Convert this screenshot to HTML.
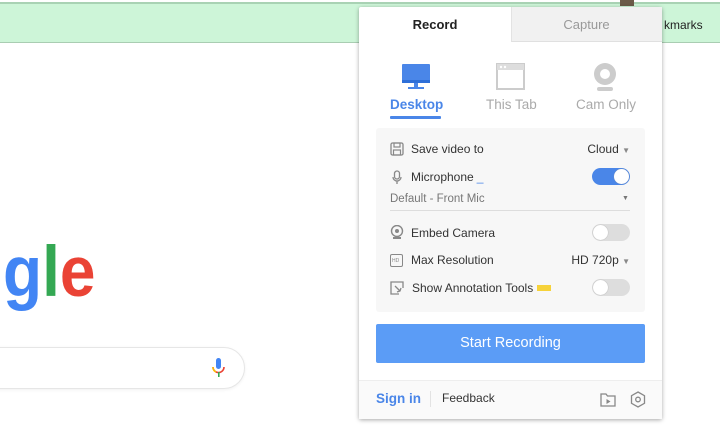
<!DOCTYPE html>
<html><head><style>
*{margin:0;padding:0;box-sizing:border-box}
body{width:720px;height:432px;overflow:hidden;background:#fff;font-family:"Liberation Sans",sans-serif;position:relative}
.abs{position:absolute}
.row{position:absolute;left:390px;font-size:12px;color:#333;display:flex;align-items:center}
.tog{position:absolute;width:38px;height:17px;border-radius:9px;background:#ddd}
.tog::after{content:"";position:absolute;top:1px;left:1px;width:15px;height:15px;border-radius:50%;background:#fff;box-shadow:0 0 1px #999}
.tog.on{background:#4a86e8}.tog.on::after{left:22px}
.ic{position:absolute;left:390px;width:13px;height:13px;border:1.5px solid #888;border-radius:2px}
.rt{position:absolute;right:90px;font-size:12px;color:#333}
</style></head><body>
<div class="abs" style="left:0;top:2px;width:720px;height:41px;background:#cdf5d8;border-top:2px solid #a9d2b4;border-bottom:1.5px solid #a9cdb2"></div>
<div class="abs" style="left:664px;top:18px;font-size:12px;color:#222">kmarks</div>
<div class="abs" style="left:620px;top:0;width:14px;height:6px;background:#6b5a48"></div>
<div class="abs" style="left:3px;top:243px;font-size:64px;font-weight:bold;line-height:1;transform:scaleY(1.12);transform-origin:0 100%"><span style="color:#4285f4">g</span><span style="color:#34a853">l</span><span style="color:#ea4335">e</span></div>
<div class="abs" style="left:-30px;top:347px;width:275px;height:42px;border:1px solid #e6e6e6;border-radius:21px;box-shadow:0 1px 3px rgba(0,0,0,.06)"></div>
<svg class="abs" style="left:211px;top:358px" width="16" height="22"><rect x="5" y="0" width="5" height="11" rx="2.5" fill="#4285f4"/><path d="M2 9a5.5 5.5 0 0 0 11 0" stroke="#ea4335" stroke-width="1.6" fill="none"/><path d="M2 9a5.5 5.5 0 0 0 3 5" stroke="#fbbc05" stroke-width="1.6" fill="none"/><rect x="7" y="14" width="1.6" height="5" fill="#34a853"/></svg>

<div class="abs" style="left:359px;top:7px;width:303px;height:412px;background:#fff;box-shadow:0 1px 4px rgba(0,0,0,.35);border-radius:2px"></div>
<div class="abs" style="left:511px;top:7px;width:151px;height:35px;background:#f1f1f1;border-bottom:1px solid #e0e0e0;border-left:1px solid #e3e3e3"></div>
<div class="abs" style="left:359px;top:17px;width:152px;text-align:center;font-size:13px;font-weight:bold;color:#222">Record</div>
<div class="abs" style="left:511px;top:17px;width:151px;text-align:center;font-size:13px;color:#999">Capture</div>

<svg class="abs" style="left:401px;top:63px" width="30" height="28"><rect x="1" y="1" width="28" height="19" rx="1" fill="#4a86e8"/><rect x="1" y="17" width="28" height="3" fill="#2e6fd8"/><rect x="13" y="20" width="4" height="4" fill="#4a86e8"/><rect x="7" y="24" width="16" height="2" fill="#4a86e8"/></svg>
<svg class="abs" style="left:496px;top:63px" width="29" height="27"><rect x="1" y="1" width="27" height="25" fill="#fff" stroke="#ccc" stroke-width="2"/><rect x="1" y="1" width="27" height="6" fill="#ddd"/><circle cx="5" cy="4" r="1.2" fill="#fff"/><circle cx="9" cy="4" r="1.2" fill="#fff"/></svg>
<svg class="abs" style="left:592px;top:62px" width="26" height="30"><circle cx="13" cy="12" r="11" fill="#ccc"/><circle cx="13" cy="12" r="5" fill="#fff"/><rect x="5" y="25" width="16" height="4" rx="2" fill="#ccc"/></svg>
<div class="abs" style="left:390px;top:97px;font-size:13.5px;font-weight:bold;color:#4a86e8">Desktop</div>
<div class="abs" style="left:390px;top:116px;width:51px;height:3px;background:#4a86e8;border-radius:1px"></div>
<div class="abs" style="left:486px;top:97px;font-size:13.5px;color:#aaa">This Tab</div>
<div class="abs" style="left:576px;top:97px;font-size:13.5px;color:#aaa">Cam Only</div>

<div class="abs" style="left:376px;top:128px;width:269px;height:184px;background:#f7f7f7;border-radius:3px"></div>
<svg class="abs" style="left:390px;top:142px" width="14" height="14"><rect x="1" y="1" width="12" height="12" rx="1.5" fill="none" stroke="#888" stroke-width="1.3"/><rect x="4" y="1" width="6" height="4" fill="none" stroke="#888" stroke-width="1.2"/><rect x="3.5" y="8" width="7" height="5" fill="none" stroke="#888" stroke-width="1.2"/></svg>
<div class="row" style="left:411px;top:142px">Save video to</div><div class="rt" style="top:142px">Cloud <span style="font-size:8px;color:#888">▼</span></div>
<svg class="abs" style="left:392px;top:170px" width="10" height="15"><rect x="2.5" y="1" width="5" height="8" rx="2.5" fill="none" stroke="#888" stroke-width="1.3"/><path d="M1 7a4 4 0 0 0 8 0M5 11v3" stroke="#888" stroke-width="1.3" fill="none"/></svg>
<div class="row" style="left:411px;top:170px">Microphone <span style="color:#4a86e8;margin-left:3px">_</span></div>
<div class="tog on" style="left:592px;top:168px"></div>
<div class="row" style="top:193px;color:#777;font-size:11.5px">Default - Front Mic</div><div class="abs" style="left:622px;top:195px;font-size:7px;color:#777">▼</div>
<div class="abs" style="left:390px;top:210px;width:240px;height:1px;background:#ddd"></div>
<svg class="abs" style="left:390px;top:225px" width="14" height="15"><circle cx="7" cy="6" r="5.5" fill="none" stroke="#888" stroke-width="1.4"/><circle cx="7" cy="6" r="2" fill="#888"/><rect x="3" y="12" width="8" height="2" fill="#888"/></svg>
<div class="row" style="left:411px;top:226px">Embed Camera</div><div class="tog" style="left:592px;top:224px"></div>
<div class="ic" style="top:254px"></div><div class="abs" style="left:392px;top:258px;font-size:5px;color:#888">HD</div>
<div class="row" style="left:411px;top:253px">Max Resolution</div><div class="rt" style="top:253px">HD 720p <span style="font-size:8px;color:#888">▼</span></div>
<svg class="abs" style="left:390px;top:281px" width="15" height="15"><path d="M9 13H1V1h12v6" fill="none" stroke="#888" stroke-width="1.3"/><path d="M5 5l5 5M7 11l3-1 1-3" stroke="#888" stroke-width="1.3" fill="none"/></svg>
<div class="row" style="left:412px;top:281px">Show Annotation Tools <span style="display:inline-block;width:14px;height:6px;background:#f6d23a;margin-left:4px"></span></div>
<div class="tog" style="left:592px;top:279px"></div>

<div class="abs" style="left:376px;top:324px;width:269px;height:39px;background:#5b9cf6;border-radius:2px;color:#fff;font-size:14.5px;text-align:center;line-height:39px">Start Recording</div>
<div class="abs" style="left:359px;top:380px;width:303px;height:39px;background:#fafafa;border-top:1px solid #eee"></div>
<div class="abs" style="left:376px;top:391px;font-size:13.5px;font-weight:bold;color:#4a86e8">Sign in</div>
<div class="abs" style="left:430px;top:391px;width:1px;height:16px;background:#e3e3e3"></div>
<div class="abs" style="left:442px;top:391px;font-size:12px;color:#333">Feedback</div>
<svg class="abs" style="left:600px;top:392px" width="16" height="15"><path d="M1 2h5l1.5 2H15v10H1z" fill="none" stroke="#888" stroke-width="1.3"/><path d="M6.5 7l4 2.5-4 2.5z" fill="#888"/></svg>
<svg class="abs" style="left:630px;top:391px" width="16" height="17"><path d="M8 1l6.5 3.7v7.6L8 16 1.5 12.3V4.7z" fill="none" stroke="#888" stroke-width="1.3"/><circle cx="8" cy="8.5" r="2.3" fill="none" stroke="#888" stroke-width="1.3"/></svg>
</body></html>
